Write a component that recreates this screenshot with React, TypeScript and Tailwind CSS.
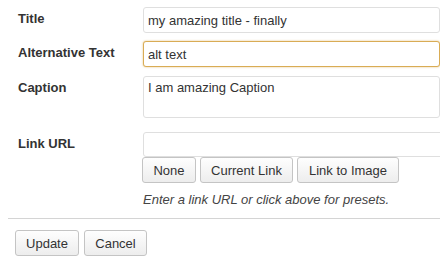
import React from 'react';

const labelCls = "w-[143px] shrink-0 pl-[18px] pt-[4px] text-[13px] leading-[16px] font-bold text-[#333]";
const inputCls = "w-[320px] h-[26px] px-[4px] rounded-[3px] border border-[#dfdfdf] bg-white text-[13px] text-[#333] outline-none";
const btnCls = "h-[26px] px-[10px] rounded-[3px] border border-[#c4c4c4] bg-gradient-to-b from-[#fefefe] to-[#ededed] text-[13px] text-[#333] leading-none";

export default function App() {
  return (
    <div className="w-[440px] h-[268px] overflow-hidden bg-white font-['Liberation_Sans',Arial,sans-serif]">
      <div className="flex flex-col pt-[7px]">
        {/* Title */}
        <div className="flex">
          <label className={labelCls}>Title</label>
          <input className={inputCls} defaultValue="my amazing title - finally" />
        </div>

        {/* Alt text - focused */}
        <div className="flex mt-[8px]">
          <label className={labelCls}>Alternative Text</label>
          <input
            className="w-[320px] h-[26px] px-[4px] rounded-[3px] border border-[#d9ac55] shadow-[0_0_2px_rgba(217,172,85,0.8)] bg-white text-[13px] text-[#333] outline-none"
            defaultValue="alt text"
          />
        </div>

        {/* Caption */}
        <div className="flex mt-[9px]">
          <label className={labelCls}>Caption</label>
          <textarea
            className="w-[320px] h-[42px] px-[4px] pt-[3px] rounded-[3px] border border-[#dfdfdf] bg-white text-[13px] leading-[16px] text-[#333] outline-none resize-none"
            defaultValue="I am amazing Caption"
          />
        </div>

        {/* Link URL */}
        <div className="flex mt-[14px]">
          <label className={labelCls}>Link URL</label>
          <div className="flex flex-col">
            <input className="w-[320px] h-[25px] px-[4px] rounded-[3px] border border-[#dfdfdf] bg-white text-[13px] outline-none" defaultValue="" />
            <div className="flex gap-[4px] -ml-[1px]">
              <button className={btnCls + " w-[54px]"}>None</button>
              <button className={btnCls + " w-[93px]"}>Current Link</button>
              <button className={btnCls + " w-[102px]"}>Link to Image</button>
            </div>
            <p className="mt-[9px] text-[13px] leading-[16px] italic text-[#444]">
              Enter a link URL or click above for presets.
            </p>
          </div>
        </div>

        <div className="ml-[8px] mt-[10px] h-[2px] border-t border-[#d4d4d4] border-b-white" />

        <div className="flex gap-[5px] pl-[15px] mt-[10px]">
          <button className={btnCls + " w-[64px]"}>Update</button>
          <button className={btnCls + " w-[63px]"}>Cancel</button>
        </div>
      </div>
    </div>
  );
}
